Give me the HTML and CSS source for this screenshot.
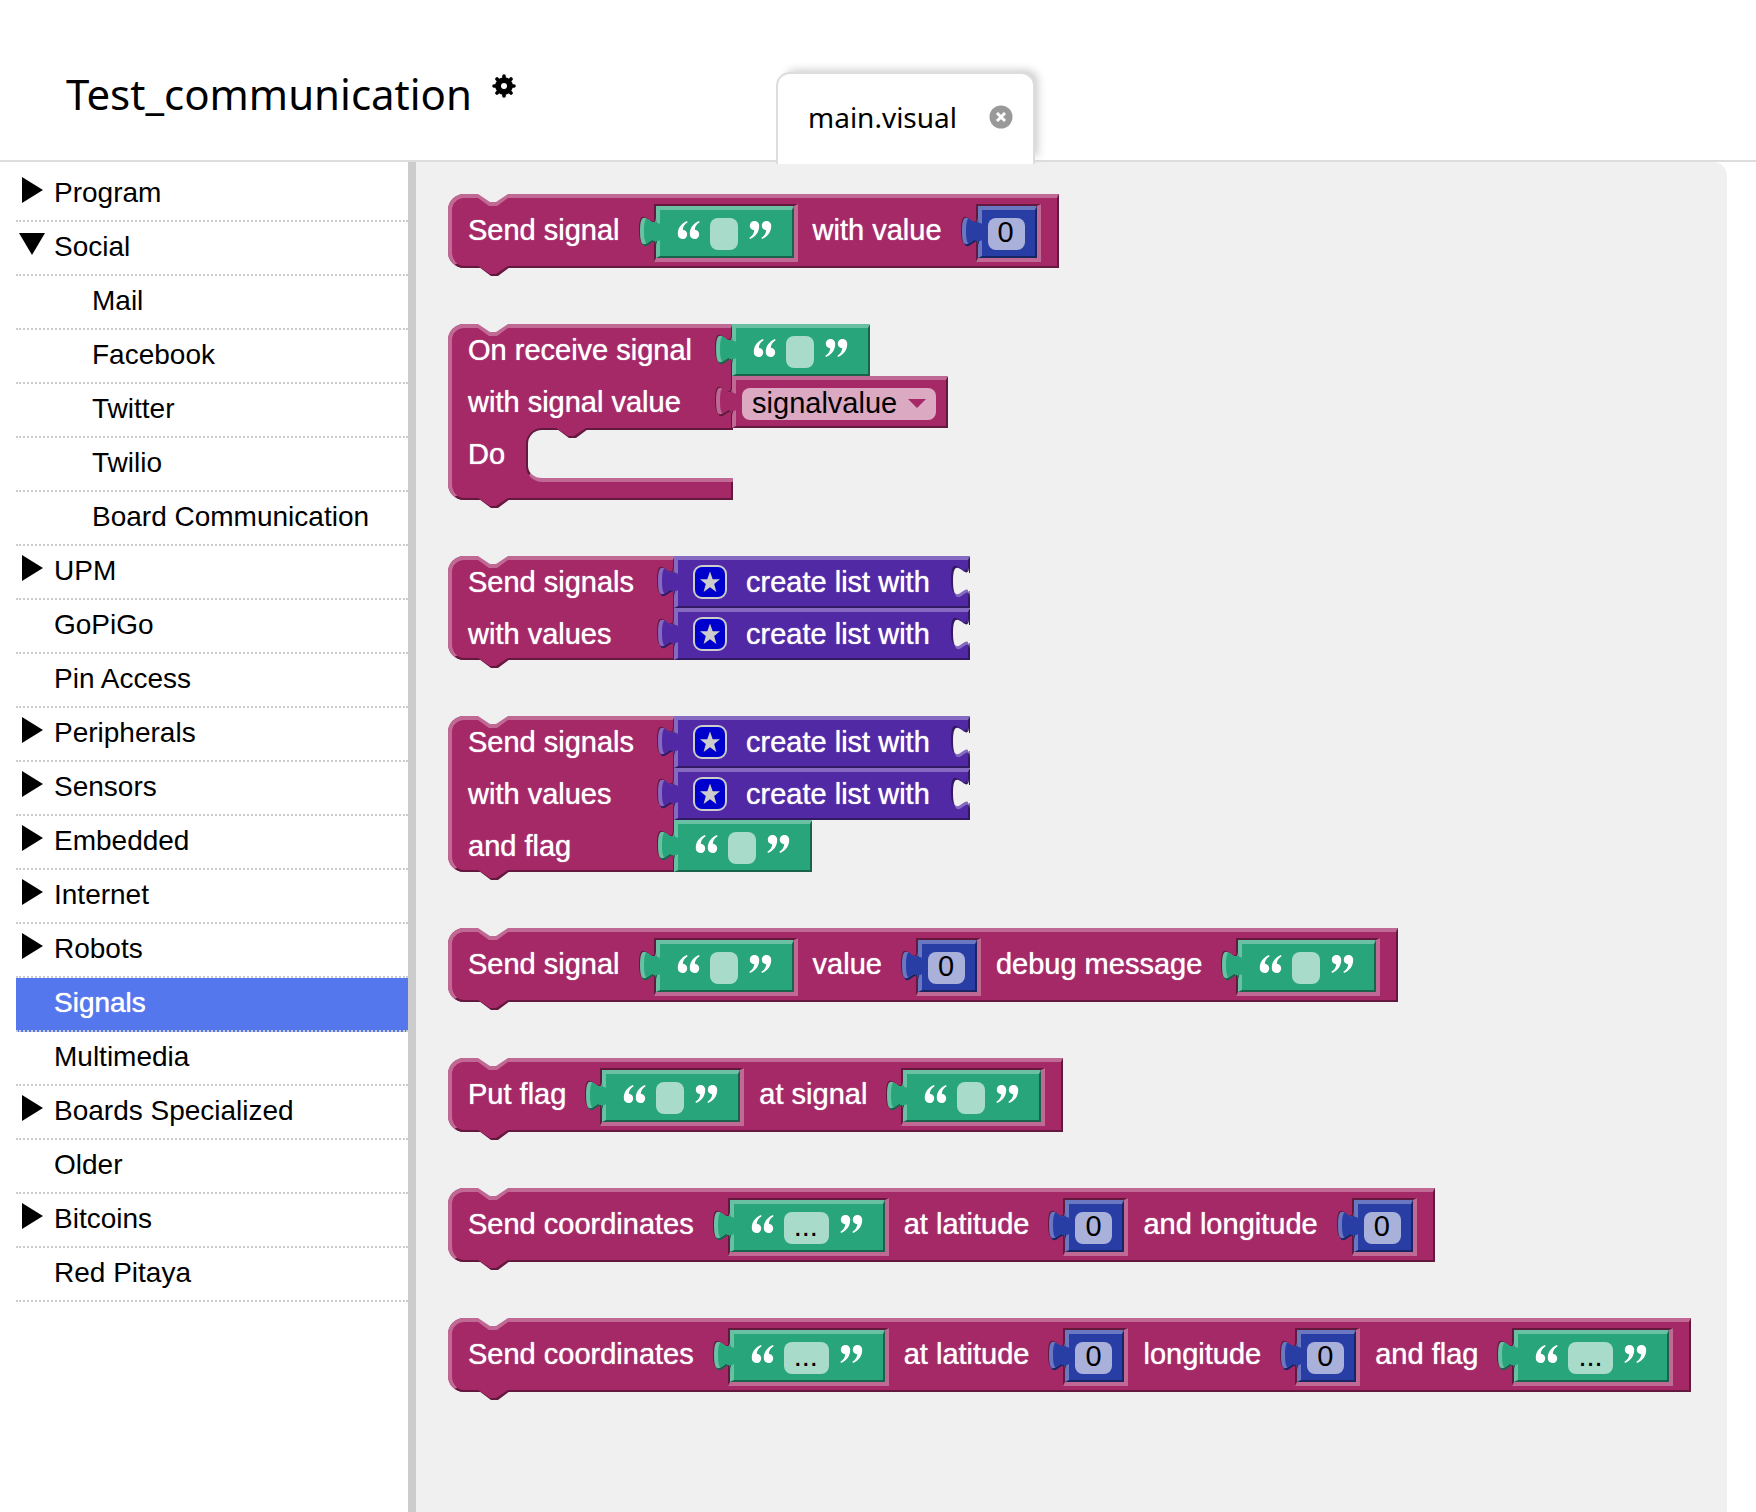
FILE: index.html
```html
<!DOCTYPE html>
<html lang="en">
<head>
<meta charset="utf-8">
<title>Test_communication</title>
<link rel="stylesheet" href="styles.css">
</head>
<body>
<svg class="defs" width="0" height="0" aria-hidden="true">
  <defs>
    <path id="tab-shape" d="M20 10C20 30 4 -6 4 25S20 20 20 40Z"/>
    <clipPath id="tab-clip"><use href="#tab-shape"/></clipPath>
    <clipPath id="tab-foot"><path d="M0 33H24V52H0Z"/></clipPath>
    <path id="quote-mark" d="M11 2C5 4.500 1.800 9 1.800 15.200A4.700 4.700 0 1 0 6.800 10.700C7 7.500 8.600 5 11.600 3.200Z"/>
  </defs>
  <symbol id="tab" viewBox="0 0 24 52">
    <use href="#tab-shape" x="-1" y="-1" style="fill:#63193e"/>
    <use href="#tab-shape" x="1" y="2" style="fill:var(--dark)"/>
    <use href="#tab-shape" style="fill:var(--light)"/>
    <g clip-path="url(#tab-clip)"><use href="#tab-shape" x="4" style="fill:var(--main)"/></g>
    <path d="M17 17H22Q24 17 24 19V33Q24 35 22 35H17Z" style="fill:var(--main)"/>
  </symbol>
  <symbol id="socket" viewBox="0 0 24 52">
    <use href="#tab-shape" x="-2" y="-2" style="fill:var(--dark)"/>
    <g clip-path="url(#tab-foot)"><use href="#tab-shape" x="1" y="3" style="fill:var(--light)"/></g>
    <use href="#tab-shape" class="paper"/>
    <path d="M19 17H24V35H19Z" class="paper"/>
  </symbol>
  <symbol id="notch" viewBox="0 0 30 12">
    <path d="M0 0V4L11 12H19L30 4V0Z" style="fill:var(--light)"/>
    <path d="M0 0L12 8H18L30 0Z" class="paper"/>
  </symbol>
  <symbol id="nose" viewBox="0 0 34 10">
    <path d="M1 1L13 10H20L32 1Z" style="fill:var(--dark)"/>
    <path d="M0 0H30L18 8H12Z" style="fill:var(--main)"/>
  </symbol>
  <symbol id="open" viewBox="0 2 24 26">
    <use href="#quote-mark" fill="#fff"/><use href="#quote-mark" x="12" fill="#fff"/>
  </symbol>
  <symbol id="close" viewBox="0 2 24 26">
    <g transform="rotate(180 12.500 11)"><use href="#quote-mark" fill="#fff"/><use href="#quote-mark" x="12" fill="#fff"/></g>
  </symbol>
  <symbol id="star" viewBox="0 0 34 34">
    <rect x="1" y="1" width="32" height="32" rx="8" fill="#00c" stroke="#ccc" stroke-width="2"/>
    <path d="M17 6.500L19.700 14.200H27L21.200 19L23.400 27L17 22.200L10.600 27L12.800 19L7 14.200H14.300Z" fill="#ccc"/>
  </symbol>
</svg>

<header class="header">
  <div class="project">
    <h1 class="project-name">Test_communication</h1>
    <button class="gear" aria-label="Project settings">
      <svg viewBox="0 0 24 24" width="24" height="24">
        <g stroke="#000" stroke-width="3.600" stroke-linecap="round"><path d="M12 2V22M2 12H22M5 5L19 19M19 5L5 19"/></g>
        <circle cx="12" cy="12" r="8.800" fill="#000"/><circle cx="12" cy="12" r="3" fill="#fff"/>
      </svg>
    </button>
  </div>
  <div class="file-tab">
    <span>main.visual</span>
    <button class="close" aria-label="Close main.visual">
      <svg viewBox="0 0 24 24" width="24" height="24"><circle cx="12" cy="12" r="11.500" fill="#999"/><path d="M8 8L16 16M16 8L8 16" stroke="#fff" stroke-width="3"/></svg>
    </button>
  </div>
</header>

<div class="workspace">
  <nav class="toolbox" aria-label="Block categories">
    <ul class="tree">
      <li><a class="group" href="#">Program</a></li>
      <li><a class="group open" href="#">Social</a>
        <ul>
          <li><a href="#">Mail</a></li>
          <li><a href="#">Facebook</a></li>
          <li><a href="#">Twitter</a></li>
          <li><a href="#">Twilio</a></li>
          <li><a href="#">Board Communication</a></li>
        </ul>
      </li>
      <li><a class="group" href="#">UPM</a></li>
      <li><a href="#">GoPiGo</a></li>
      <li><a href="#">Pin Access</a></li>
      <li><a class="group" href="#">Peripherals</a></li>
      <li><a class="group" href="#">Sensors</a></li>
      <li><a class="group" href="#">Embedded</a></li>
      <li><a class="group" href="#">Internet</a></li>
      <li><a class="group" href="#">Robots</a></li>
      <li><a class="selected" href="#" aria-current="true">Signals</a></li>
      <li><a href="#">Multimedia</a></li>
      <li><a class="group" href="#">Boards Specialized</a></li>
      <li><a href="#">Older</a></li>
      <li><a class="group" href="#">Bitcoins</a></li>
      <li><a href="#">Red Pitaya</a></li>
    </ul>
  </nav>

  <main class="flyout">
    <div class="block inline">
      <svg class="notch"><use href="#notch"/></svg><svg class="nose"><use href="#nose"/></svg>
      <span class="label">Send signal</span>
      <span class="slot"><span class="value text"><svg class="tab"><use href="#tab"/></svg><svg class="quote"><use href="#open"/></svg><input class="field empty" aria-label="Signal"><svg class="quote"><use href="#close"/></svg></span></span>
      <span class="label">with value</span>
      <span class="slot"><span class="value number"><svg class="tab"><use href="#tab"/></svg><input class="field" value="0" aria-label="Value"></span></span>
    </div>

    <div class="block stacked">
      <div class="body">
        <svg class="notch"><use href="#notch"/></svg><svg class="nose"><use href="#nose"/></svg>
        <span class="label">On receive signal</span>
        <span class="label">with signal value</span>
        <div class="do"><span class="label">Do</span><div class="mouth"><svg class="nose-in"><use href="#nose"/></svg></div></div>
      </div>
      <div class="inputs">
        <span class="value text"><svg class="tab"><use href="#tab"/></svg><svg class="quote"><use href="#open"/></svg><input class="field empty" aria-label="Signal"><svg class="quote"><use href="#close"/></svg></span>
        <span class="value variable"><svg class="tab"><use href="#tab"/></svg><span class="dropdown"><select aria-label="Variable"><option>signalvalue</option></select></span></span>
      </div>
    </div>

    <div class="block stacked">
      <div class="body">
        <svg class="notch"><use href="#notch"/></svg><svg class="nose"><use href="#nose"/></svg>
        <span class="label">Send signals</span>
        <span class="label">with values</span>
      </div>
      <div class="inputs">
        <span class="value list"><svg class="tab"><use href="#tab"/></svg><svg class="star"><use href="#star"/></svg><span class="label">create list with</span><svg class="socket"><use href="#socket"/></svg></span>
        <span class="value list"><svg class="tab"><use href="#tab"/></svg><svg class="star"><use href="#star"/></svg><span class="label">create list with</span><svg class="socket"><use href="#socket"/></svg></span>
      </div>
    </div>

    <div class="block stacked">
      <div class="body">
        <svg class="notch"><use href="#notch"/></svg><svg class="nose"><use href="#nose"/></svg>
        <span class="label">Send signals</span>
        <span class="label">with values</span>
        <span class="label">and flag</span>
      </div>
      <div class="inputs">
        <span class="value list"><svg class="tab"><use href="#tab"/></svg><svg class="star"><use href="#star"/></svg><span class="label">create list with</span><svg class="socket"><use href="#socket"/></svg></span>
        <span class="value list"><svg class="tab"><use href="#tab"/></svg><svg class="star"><use href="#star"/></svg><span class="label">create list with</span><svg class="socket"><use href="#socket"/></svg></span>
        <span class="value text"><svg class="tab"><use href="#tab"/></svg><svg class="quote"><use href="#open"/></svg><input class="field empty" aria-label="Flag"><svg class="quote"><use href="#close"/></svg></span>
      </div>
    </div>

    <div class="block inline">
      <svg class="notch"><use href="#notch"/></svg><svg class="nose"><use href="#nose"/></svg>
      <span class="label">Send signal</span>
      <span class="slot"><span class="value text"><svg class="tab"><use href="#tab"/></svg><svg class="quote"><use href="#open"/></svg><input class="field empty" aria-label="Signal"><svg class="quote"><use href="#close"/></svg></span></span>
      <span class="label">value</span>
      <span class="slot"><span class="value number"><svg class="tab"><use href="#tab"/></svg><input class="field" value="0" aria-label="Value"></span></span>
      <span class="label">debug message</span>
      <span class="slot"><span class="value text"><svg class="tab"><use href="#tab"/></svg><svg class="quote"><use href="#open"/></svg><input class="field empty" aria-label="Debug message"><svg class="quote"><use href="#close"/></svg></span></span>
    </div>

    <div class="block inline">
      <svg class="notch"><use href="#notch"/></svg><svg class="nose"><use href="#nose"/></svg>
      <span class="label">Put flag</span>
      <span class="slot"><span class="value text"><svg class="tab"><use href="#tab"/></svg><svg class="quote"><use href="#open"/></svg><input class="field empty" aria-label="Flag"><svg class="quote"><use href="#close"/></svg></span></span>
      <span class="label">at signal</span>
      <span class="slot"><span class="value text"><svg class="tab"><use href="#tab"/></svg><svg class="quote"><use href="#open"/></svg><input class="field empty" aria-label="Signal"><svg class="quote"><use href="#close"/></svg></span></span>
    </div>

    <div class="block inline">
      <svg class="notch"><use href="#notch"/></svg><svg class="nose"><use href="#nose"/></svg>
      <span class="label">Send coordinates</span>
      <span class="slot"><span class="value text"><svg class="tab"><use href="#tab"/></svg><svg class="quote"><use href="#open"/></svg><input class="field dots" value="..." aria-label="Coordinates"><svg class="quote"><use href="#close"/></svg></span></span>
      <span class="label">at latitude</span>
      <span class="slot"><span class="value number"><svg class="tab"><use href="#tab"/></svg><input class="field" value="0" aria-label="Latitude"></span></span>
      <span class="label">and longitude</span>
      <span class="slot"><span class="value number"><svg class="tab"><use href="#tab"/></svg><input class="field" value="0" aria-label="Longitude"></span></span>
    </div>

    <div class="block inline">
      <svg class="notch"><use href="#notch"/></svg><svg class="nose"><use href="#nose"/></svg>
      <span class="label">Send coordinates</span>
      <span class="slot"><span class="value text"><svg class="tab"><use href="#tab"/></svg><svg class="quote"><use href="#open"/></svg><input class="field dots" value="..." aria-label="Coordinates"><svg class="quote"><use href="#close"/></svg></span></span>
      <span class="label">at latitude</span>
      <span class="slot"><span class="value number"><svg class="tab"><use href="#tab"/></svg><input class="field" value="0" aria-label="Latitude"></span></span>
      <span class="label">longitude</span>
      <span class="slot"><span class="value number"><svg class="tab"><use href="#tab"/></svg><input class="field" value="0" aria-label="Longitude"></span></span>
      <span class="label">and flag</span>
      <span class="slot"><span class="value text"><svg class="tab"><use href="#tab"/></svg><svg class="quote"><use href="#open"/></svg><input class="field dots" value="..." aria-label="Flag"><svg class="quote"><use href="#close"/></svg></span></span>
    </div>
  </main>
</div>
</body>
</html>
```
FILE: styles.css
```css
* { box-sizing: border-box; }

body {
  margin: 0;
  min-height: 100vh;
  display: flex;
  flex-direction: column;
  background: #fff;
  color: #000;
  font-family: "Liberation Sans", Arial, sans-serif;
}

.defs { position: absolute; }
.paper { fill: #f0f0f0; }

button {
  display: flex;
  padding: 0;
  border: 0;
  background: none;
}

/* Header */
.header {
  display: flex;
  height: 162px;
  border-bottom: 2px solid #ddd;
  font-family: "Noto Sans", "Open Sans", sans-serif;
}

.project {
  display: flex;
  flex: 0 0 776px;
  align-items: flex-start;
  gap: 20px;
  padding: 66px 0 0 66px;
}

.project-name {
  margin: 0;
  font-size: 42px;
  font-weight: 400;
  line-height: 56px;
}

.gear { margin-top: 8px; }

.file-tab {
  position: relative;
  z-index: 1;
  display: flex;
  align-items: center;
  gap: 32px;
  height: 92px;
  margin-top: 72px;
  padding: 0 20px 4px 30px;
  border: 2px solid #ddd;
  border-bottom: 0;
  border-radius: 14px 14px 0 0;
  background: #fff;
  box-shadow: 6px -5px 8px -3px rgba(0, 0, 0, 0.2);
  font-size: 28px;
}

/* Category tree */
.workspace {
  display: flex;
  flex: 1;
}

.toolbox {
  flex: 0 0 416px;
  padding: 6px 0 0 16px;
  border-right: 8px solid #ccc;
}

.tree, .tree ul {
  margin: 0;
  padding: 0;
  list-style: none;
}

.tree a {
  position: relative;
  display: block;
  height: 54px;
  padding-left: 38px;
  border-bottom: 2px dotted #ccc;
  color: #000;
  font-size: 28px;
  line-height: 50px;
  text-decoration: none;
}

.tree ul a { padding-left: 76px; }

.tree .selected {
  background: #57e;
  color: #fff;
  text-shadow: 0 0 1px #fff;
}

.group::before {
  content: "";
  position: absolute;
  top: 9px;
  left: 6px;
  border: solid transparent;
  border-width: 13px 0 13px 21px;
  border-left-color: #000;
}

.group.open::before {
  top: 11px;
  left: 3px;
  border-width: 22px 13px 0;
  border-color: #000 transparent transparent;
}

/* Block flyout */
.flyout {
  display: flex;
  flex: 1;
  flex-direction: column;
  align-items: flex-start;
  gap: 56px;
  margin-right: 29px;
  padding: 32px;
  border-radius: 0 14px 0 0;
  background: #f0f0f0;
  font-size: 29px;
}

.block {
  --main: #a52967;
  --light: #c06995;
  --dark: #63193e;
  position: relative;
  display: flex;
  color: #fff;
  white-space: nowrap;
}

.inline, .body {
  border-radius: 16px 0 0 16px;
  background: var(--main);
}

.inline { padding: 10px 18px 6px 20px; }

.inline::before, .body::before, .value::before {
  content: "";
  position: absolute;
  inset: 0;
  border: solid;
  border-width: 4px 2px 2px 4px;
  border-color: var(--light) var(--dark) var(--dark) var(--light);
  border-radius: inherit;
}

.notch {
  position: absolute;
  top: 0;
  left: 30px;
  width: 30px;
  height: 12px;
}

.nose {
  position: absolute;
  bottom: -8px;
  left: 30px;
  width: 34px;
  height: 10px;
}

.label {
  position: relative;
  line-height: 52px;
  text-shadow: 0 0 1px #fff;
}

.slot {
  position: relative;
  margin: 0 15px 0 34px;
  border: solid;
  border-width: 2px 4px 4px 2px;
  border-color: var(--dark) var(--light) var(--light) var(--dark);
}

.slot:last-child { margin-right: 0; }

.value {
  position: relative;
  display: flex;
  align-items: center;
  height: 52px;
  border-radius: 0 2px 0 0;
  background: var(--main);
}

.text {
  --main: #29a57c;
  --light: #69c0a3;
  --dark: #19634a;
  padding: 4px 22px 0 20px;
}

.number {
  --main: #293ea5;
  --light: #6978c0;
  --dark: #192563;
  padding: 4px 12px 0 10px;
}

.list {
  --main: #5229a5;
  --light: #8669c0;
  --dark: #311963;
  gap: 19px;
  padding: 0 40px 0 19px;
}

.variable { padding: 4px 12px 0 10px; }

.tab {
  position: absolute;
  top: 0;
  left: -20px;
  width: 24px;
  height: 52px;
}

.socket {
  position: absolute;
  top: 0;
  right: -3px;
  width: 24px;
  height: 52px;
}

.quote {
  position: relative;
  width: 24px;
  height: 26px;
}

.star {
  position: relative;
  width: 34px;
  height: 34px;
}

.field, .dropdown {
  position: relative;
  height: 32px;
  border-radius: 8px;
  background: rgba(255, 255, 255, 0.6);
}

.field {
  width: 37px;
  padding: 0 10px 3px;
  border: 0;
  color: #000;
  font: inherit;
  line-height: 29px;
}

.empty, .dots { margin: 0 10px; }
.empty { width: 28px; }
.dots { width: 45px; }

.dropdown select {
  display: block;
  width: 194px;
  height: 34px;
  margin-top: -2px;
  padding: 0 10px;
  border: 0;
  background: none;
  color: #000;
  font: inherit;
  line-height: 34px;
  appearance: none;
}

.dropdown::after {
  content: "";
  position: absolute;
  top: 11px;
  right: 10px;
  border: solid transparent;
  border-width: 9px 9px 0;
  border-top-color: var(--main);
  pointer-events: none;
}

/* Blocks whose inputs plug in on the right */
.stacked { align-items: flex-start; }

.body {
  position: relative;
  display: flex;
  flex-direction: column;
}

.body > .label { padding: 0 41px 0 20px; }

.inputs {
  display: flex;
  flex-direction: column;
  align-items: flex-start;
  margin-left: -1px;
}

.do {
  display: flex;
  gap: 21px;
  height: 72px;
  padding-left: 20px;
}

.mouth {
  position: relative;
  flex: 1;
  height: 54px;
  border: solid;
  border-width: 2px 0 4px 2px;
  border-color: var(--dark) transparent var(--light) var(--dark);
  border-radius: 16px 0 0 16px;
  background: #f0f0f0;
}

.nose-in {
  position: absolute;
  top: -2px;
  left: 28px;
  width: 34px;
  height: 10px;
}
```
